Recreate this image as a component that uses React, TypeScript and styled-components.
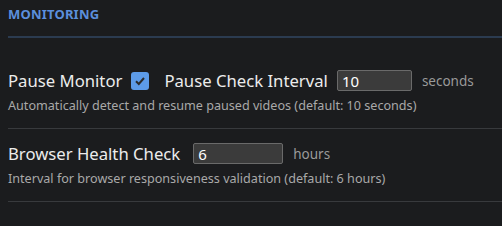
import { useState } from 'react';
import styled, { createGlobalStyle } from 'styled-components';

const GlobalStyle = createGlobalStyle`
  html, body {
    margin: 0;
    background: #1b1c1e;
  }
  body {
    padding: 8px 0 0 8px;
    font-family: "Noto Sans", "Open Sans", sans-serif;
    color: #e4e4e4;
  }
`;

const Section = styled.section`
  display: flex;
  flex-direction: column;
`;

const SectionTitle = styled.h3`
  margin: 0 0 18px;
  padding-bottom: 15px;
  border-bottom: 2px solid #2b3b50;
  font-size: 13px;
  line-height: 13px;
  font-weight: 700;
  letter-spacing: 0.2px;
  color: #5b8fdc;
`;

const SettingRow = styled.div`
  padding: 14px 0;
  border-bottom: 1px solid #383a3d;
`;

const Line = styled.div`
  display: flex;
  align-items: center;
  height: 21px;
`;

const Label = styled.span<{ $gap?: number }>`
  font-size: 16.7px;
  color: #ececec;
  margin-right: ${(p) => p.$gap ?? 9}px;
  white-space: nowrap;
`;

const Check = styled.span`
  display: inline-flex;
  align-items: center;
  justify-content: center;
  width: 18px;
  height: 18px;
  border-radius: 3px;
  background: #5d9be8;
  margin-right: 15px;
  cursor: pointer;
`;

const NumberInput = styled.input<{ $w: number }>`
  box-sizing: border-box;
  width: ${(p) => p.$w}px;
  height: 21px;
  padding: 0 4px;
  background: #3b3b3b;
  border: 1px solid #6a6a6a;
  border-radius: 2px;
  color: #fff;
  font-family: inherit;
  font-size: 15px;
  outline: none;
  margin-right: 10px;
`;

const Unit = styled.span`
  font-size: 13.5px;
  color: #9a9a9a;
`;

const Hint = styled.div`
  margin-top: 7px;
  font-size: 12.6px;
  line-height: 16px;
  color: #a9a9a9;
  white-space: nowrap;
`;

function App() {
  const [paused, setPaused] = useState(true);

  return (
    <>
      <GlobalStyle />
      <Section>
        <SectionTitle>MONITORING</SectionTitle>

        <SettingRow>
          <Line>
            <Label>Pause Monitor</Label>
            <Check role="checkbox" aria-checked={paused} onClick={() => setPaused(!paused)}>
              {paused && (
                <svg width="12" height="12" viewBox="0 0 12 12">
                  <path d="M2 6.3 L4.8 9 L10 3" fill="none" stroke="#2b2b2b" strokeWidth="2" />
                </svg>
              )}
            </Check>
            <Label>Pause Check Interval</Label>
            <NumberInput $w={75} defaultValue="10" />
            <Unit>seconds</Unit>
          </Line>
          <Hint>Automatically detect and resume paused videos (default: 10 seconds)</Hint>
        </SettingRow>

        <SettingRow>
          <Line>
            <Label $gap={13}>Browser Health Check</Label>
            <NumberInput $w={90} defaultValue="6" />
            <Unit>hours</Unit>
          </Line>
          <Hint>Interval for browser responsiveness validation (default: 6 hours)</Hint>
        </SettingRow>
      </Section>
    </>
  );
}

export default App;
